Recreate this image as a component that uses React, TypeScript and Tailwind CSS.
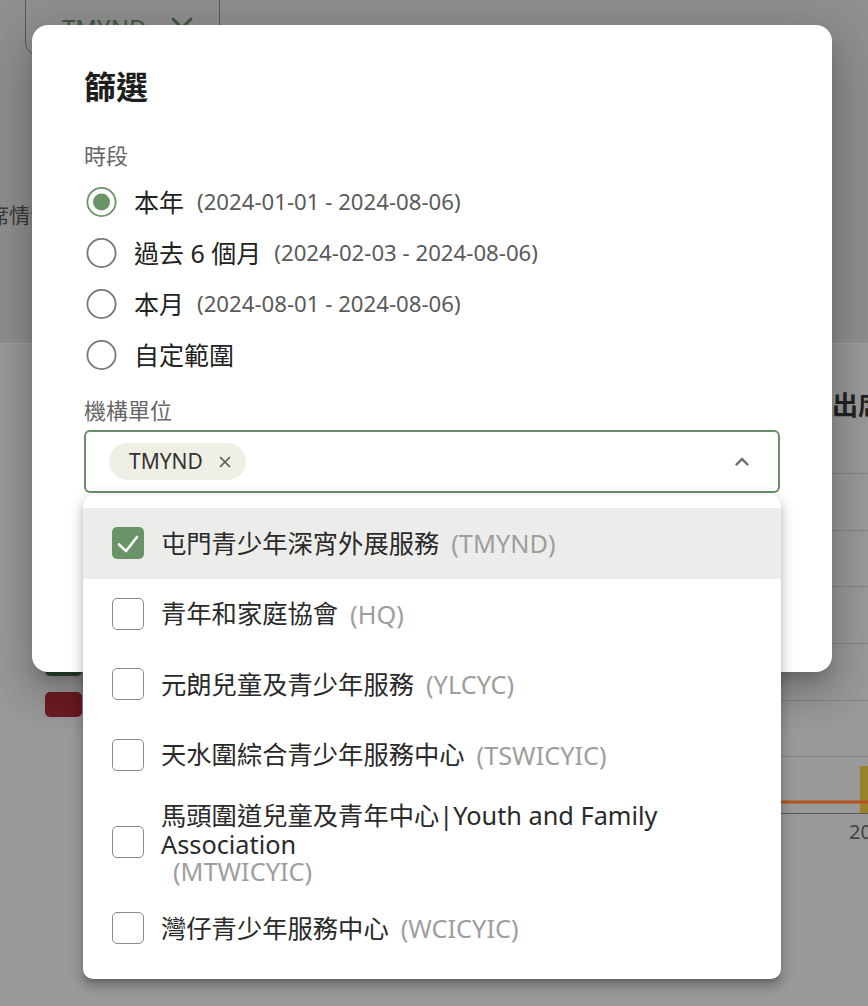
import React from "react";

const FONT = "font-['Noto_Sans','Noto_Sans_CJK_TC',sans-serif]";

function RadioIcon({ checked }: { checked: boolean }) {
  return (
    <svg width="36" height="36" viewBox="0 0 36 36" className="shrink-0">
      <circle
        cx="17.5"
        cy="18"
        r="14.1"
        fill="none"
        stroke={checked ? "#6b9368" : "#777777"}
        strokeWidth="1.8"
      />
      {checked && <circle cx="17.5" cy="18" r="8.5" fill="#6b9368" />}
    </svg>
  );
}

function CheckBox({ checked }: { checked: boolean }) {
  if (checked) {
    return (
      <div className="w-[32px] h-[32px] shrink-0 rounded-[5px] bg-[#6a9467]">
        <svg width="32" height="32" viewBox="0 0 32 32">
          <polyline
            points="7,17.5 14,24 25,10"
            fill="none"
            stroke="#ffffff"
            strokeWidth="2.6"
            strokeLinecap="round"
            strokeLinejoin="round"
          />
        </svg>
      </div>
    );
  }
  return (
    <div className="w-[32px] h-[32px] shrink-0 rounded-[5px] border-[1.5px] border-[#8a8a8a] bg-white" />
  );
}

const radios = [
  { label: "本年", range: "(2024-01-01 - 2024-08-06)", checked: true },
  { label: "過去 6 個月", range: "(2024-02-03 - 2024-08-06)", checked: false },
  { label: "本月", range: "(2024-08-01 - 2024-08-06)", checked: false },
  { label: "自定範圍", range: "", checked: false },
];

const units = [
  { name: "屯門青少年深宵外展服務", code: "(TMYND)", checked: true },
  { name: "青年和家庭協會", code: "(HQ)", checked: false },
  { name: "元朗兒童及青少年服務", code: "(YLCYC)", checked: false },
  { name: "天水圍綜合青少年服務中心", code: "(TSWICYIC)", checked: false },
  {
    name: "馬頭圍道兒童及青年中心|Youth and Family Association",
    code: "(MTWICYIC)",
    checked: false,
  },
  { name: "灣仔青少年服務中心", code: "(WCICYIC)", checked: false },
];

export default function App() {
  return (
    <div className={`relative w-[868px] h-[1006px] overflow-hidden bg-[#999999] ${FONT}`}>
      {/* dimmed page behind the dialog */}
      <div className="h-[344px] bg-[#8f8f8f] border-b border-[#a2a2a2] overflow-hidden">
        <div className="ml-[25px] -mt-[10px] w-[195px] h-[65px] rounded-[12px] border-[1.5px] border-[#4a634a] flex items-center pl-[36px] pt-[10px] text-[24px] text-[#3f5a3d]">
          <span>TMYND</span>
          <svg width="24" height="24" viewBox="0 0 24 24" className="ml-[24px]">
            <path d="M3 3 L21 21 M21 3 L3 21" stroke="#3f5a3d" strokeWidth="3" strokeLinecap="round" />
          </svg>
        </div>
        <div className="mt-[145px] -ml-[33px] text-[21px] leading-[30px] text-[#3a3a3a] whitespace-nowrap">
          出席情況分析
        </div>
      </div>
      <div className="flex h-[662px]">
        <div className="pl-[45px] pt-[316px]">
          <div className="w-[37px] h-[16px] rounded-[5px] bg-[#2e4a2c]" />
          <div className="mt-[16px] w-[37px] h-[25px] rounded-[5px] bg-[#6d1b23]" />
        </div>
        <div className="ml-auto w-[300px] shrink-0">
          <div className="mt-[46px] pl-[212px] text-[26px] leading-[30px] font-bold text-[#222222] whitespace-nowrap">
            每月出席率
          </div>
          <svg width="300" height="341" viewBox="0 0 300 341" className="mt-[53px] block">
            {[0, 57, 113, 170, 227, 283].map((y) => (
              <line key={y} x1="0" x2="300" y1={y + 0.5} y2={y + 0.5} stroke="#848484" strokeWidth="1" />
            ))}
            <rect x="292" y="293" width="10" height="47" fill="#9b8129" />
            <line x1="0" x2="300" y1="329" y2="329" stroke="#b3521f" strokeWidth="3" />
            <line x1="0" x2="300" y1="340.5" y2="340.5" stroke="#5a5a5a" strokeWidth="1" />
          </svg>
          <div className="mt-[6px] pl-[281px] text-[20px] leading-[24px] text-[#444444] whitespace-nowrap">
            2024-08
          </div>
        </div>
      </div>

      {/* dialog */}
      <div className="absolute left-[32px] top-[25px] w-[800px] h-[647px] rounded-[16px] bg-white px-[52px] pt-[40px] shadow-[0px_11px_15px_-7px_rgba(0,0,0,0.2),0px_24px_38px_3px_rgba(0,0,0,0.14),0px_9px_46px_8px_rgba(0,0,0,0.12)]">
        <h2 className="text-[32px] leading-[44px] font-bold text-[#1e1e1e]">篩選</h2>
        <div className="mt-[31px] text-[22px] leading-[30px] text-[#666666]">時段</div>
        <div className="mt-[6px] flex flex-col">
          {radios.map((r) => (
            <div key={r.label} className="flex items-center h-[51px]">
              <RadioIcon checked={r.checked} />
              <span className="ml-[14px] text-[25px] leading-[30px] text-[#222222] whitespace-nowrap">
                {r.label}
              </span>
              {r.range && (
                <span className="ml-[13px] text-[22.2px] leading-[30px] text-[#5a5a5a] whitespace-nowrap">
                  {r.range}
                </span>
              )}
            </div>
          ))}
        </div>
        <div className="mt-[15px] text-[22px] leading-[30px] text-[#666666]">機構單位</div>
        <div className="relative mt-[5px]">
          <div className="h-[63px] rounded-[6px] border-2 border-[#6a8f68] flex items-center pl-[23px] pr-[22px]">
            <div className="h-[37px] rounded-full bg-[#efefe6] pl-[20px] pr-[15px] flex items-center text-[21px] text-[#333333]">
              <span>TMYND</span>
              <svg width="12" height="12" viewBox="0 0 12 12" className="ml-[16px]">
                <path d="M1.5 1.5 L10.5 10.5 M10.5 1.5 L1.5 10.5" stroke="#555555" strokeWidth="1.6" strokeLinecap="round" />
              </svg>
            </div>
            <svg width="28" height="28" viewBox="0 0 24 24" className="ml-auto">
              <path d="M12 8l-6 6 1.41 1.41L12 10.83l4.59 4.58L18 14z" fill="#707070" />
            </svg>
          </div>

          {/* dropdown list */}
          <div className="absolute left-[-1px] right-[-1px] top-[65px] z-10 rounded-[10px] bg-white pt-[13px] pb-[15px] shadow-[0px_5px_5px_-3px_rgba(0,0,0,0.2),0px_8px_10px_1px_rgba(0,0,0,0.14),0px_3px_14px_2px_rgba(0,0,0,0.12)]">
            {units.map((u) => (
              <div
                key={u.code}
                className={`flex items-center min-h-[70.5px] py-[10.5px] px-[29px] ${u.checked ? "bg-[#ecedea]" : ""}`}
              >
                <CheckBox checked={u.checked} />
                <div className="ml-[17px] flex flex-wrap items-center min-w-0 text-[25.3px]">
                  <span className="leading-[29px] text-[#2a2a2a]">{u.name}</span>
                  <span className="ml-[12px] leading-[24px] text-[#9e9e9e] whitespace-nowrap">{u.code}</span>
                </div>
              </div>
            ))}
          </div>
        </div>
      </div>
    </div>
  );
}
